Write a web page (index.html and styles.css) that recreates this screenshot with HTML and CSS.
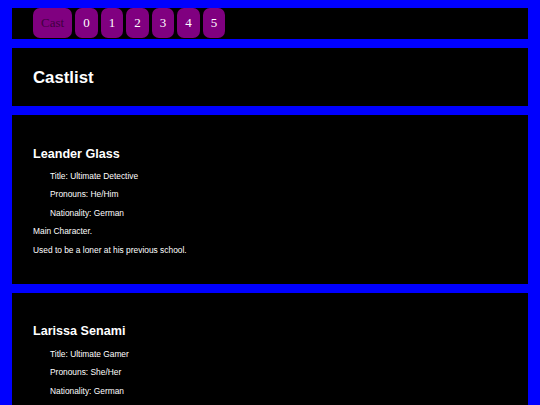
FILE: index.html
```html
<!DOCTYPE html>
<html lang="en">
<head>
<meta charset="utf-8">
<title>Castlist</title>
<link rel="stylesheet" href="styles.css">
</head>
<body>
<nav class="nav">
  <a class="nav-btn nav-current" href="#">Cast</a>
  <a class="nav-btn" href="#">0</a>
  <a class="nav-btn" href="#">1</a>
  <a class="nav-btn" href="#">2</a>
  <a class="nav-btn" href="#">3</a>
  <a class="nav-btn" href="#">4</a>
  <a class="nav-btn" href="#">5</a>
</nav>
<header class="card header-card">
  <h1 class="page-title">Castlist</h1>
</header>
<section class="card">
  <h2 class="name">Leander Glass</h2>
  <div class="facts">
    <p>Title: Ultimate Detective</p>
    <p>Pronouns: He/Him</p>
    <p>Nationality: German</p>
  </div>
  <p>Main Character.</p>
  <p>Used to be a loner at his previous school.</p>
</section>
<section class="card">
  <h2 class="name">Larissa Senami</h2>
  <div class="facts">
    <p>Title: Ultimate Gamer</p>
    <p>Pronouns: She/Her</p>
    <p>Nationality: German</p>
  </div>
  <p>Leander's first real friend at Hope's Peak.</p>
  <p>Loves video games more than anything else.</p>
</section>
</body>
</html>
```
FILE: styles.css
```css
html, body {
  background: #0000ff;
}
body {
  margin: 8px 12px;
  font-family: "Liberation Sans", Arial, sans-serif;
  font-size: 8.4px;
  color: #ffffff;
  display: flex;
  flex-direction: column;
  gap: 9px;
}
.nav {
  background: #000;
  height: 31px;
  padding-left: 21px;
  display: flex;
  align-items: flex-start;
  gap: 3px;
}
.nav-btn {
  display: flex;
  align-items: center;
  justify-content: center;
  height: 30px;
  min-width: 22.5px;
  box-sizing: border-box;
  padding: 0 8px;
  background: #800080;
  border-radius: 7px;
  font-family: "Liberation Serif", "Times New Roman", serif;
  font-size: 13px;
  color: #ffffff;
  text-decoration: none;
}
.nav-current {
  color: #400040;
}
.card {
  background: #000;
  padding: 21px;
}
.header-card {
  padding: 20px 21px 19px;
}
.page-title {
  margin: 0;
  font-size: 16.8px;
  font-weight: bold;
  line-height: 19.3px;
}
.name {
  font-size: 12.6px;
  font-weight: bold;
  margin: 10.4px 0;
}
.card p {
  margin: 8.4px 0;
}
.facts {
  padding-left: 17px;
}
```
